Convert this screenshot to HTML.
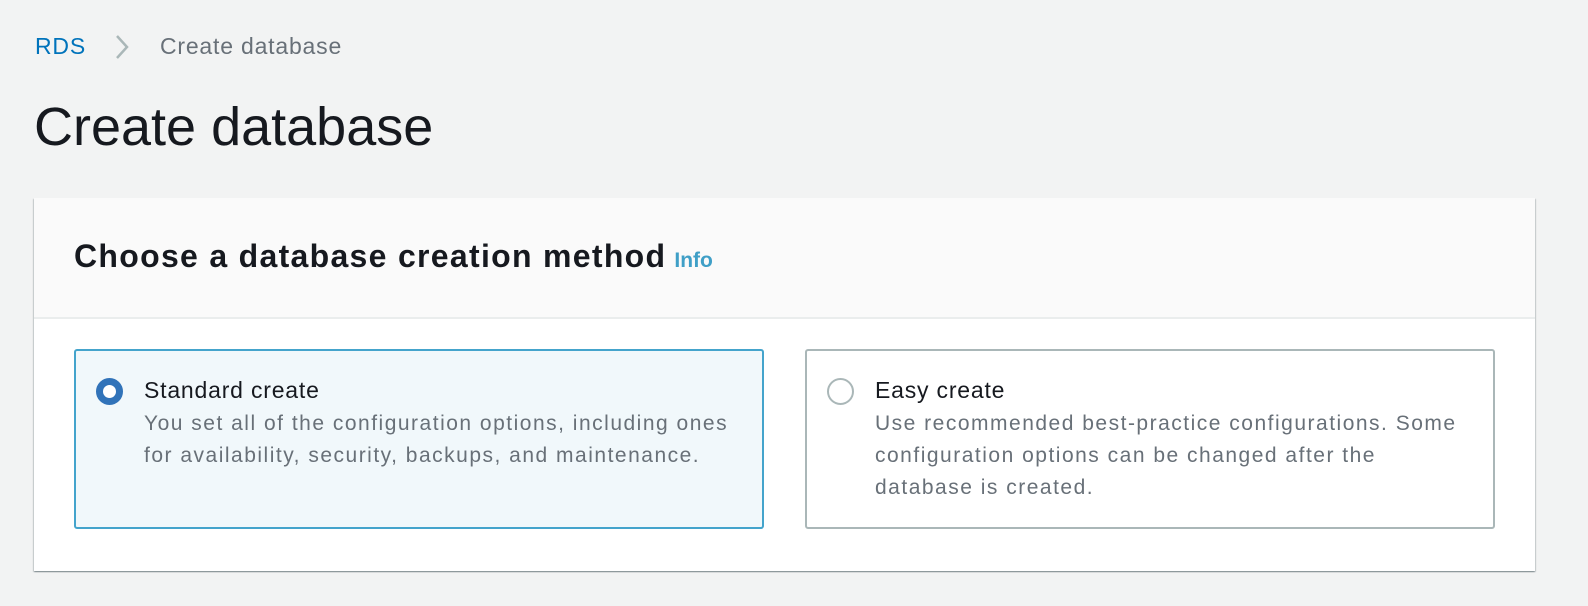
<!DOCTYPE html>
<html><head><meta charset="utf-8"><style>
*{margin:0;padding:0;box-sizing:border-box}
body{width:1588px;height:606px;background:#f2f3f3;font-family:"Liberation Sans",sans-serif;position:relative;overflow:hidden;color:#16191f}
.bc{position:absolute;top:33px;left:35px;font-size:23px;letter-spacing:.8px;color:#687078;display:flex;align-items:center}
.bc a{color:#0073bb;text-decoration:none}
h1{position:absolute;top:96px;left:34px;font-size:54px;font-weight:400;color:#16191f}
.card{position:absolute;left:34px;top:198px;width:1501px;height:373px;background:#fff;box-shadow:0 1px 1px rgba(0,28,36,.3),1px 1px 1px rgba(0,28,36,.15),-1px 1px 1px rgba(0,28,36,.15)}
.hd{height:121px;background:#fafafa;border-bottom:2px solid #eaeded;padding:40px 40px 0}
.hd h2{font-size:32px;letter-spacing:1.3px;font-weight:700;color:#16191f}
.hd h2 span{font-size:21px;letter-spacing:0;color:#3f9fc7;margin-left:8px}
.opt{position:absolute;top:151px;width:690px;height:180px;border:2px solid #aab7b8;border-radius:3px;padding:24px 20px 0 68px}
.opt.sel{border-color:#44a4cc;background:#f1f8fb}
.r{position:absolute;left:20px;top:27px;width:27px;height:27px;border-radius:50%;border:2px solid #aab7b8;background:#fff}
.sel .r{border:7px solid #3173b9}
.t{font-size:23px;letter-spacing:.8px;color:#16191f;line-height:30px}
.d{font-size:21px;letter-spacing:1.5px;color:#687078;line-height:32px;margin-top:3px;white-space:nowrap}
</style></head><body>
<div class="bc"><a>RDS</a><svg width="20" height="26" style="margin:0 28px 0 26px" viewBox="0 0 20 26"><path d="M5 2l10 11-10 11" fill="none" stroke="#aab7b8" stroke-width="2.5"/></svg><span>Create database</span></div>
<h1>Create database</h1>
<div class="card">
<div class="hd"><h2>Choose a database creation method<span>Info</span></h2></div>
<div class="opt sel" style="left:40px"><div class="r"></div><div class="t">Standard create</div><div class="d">You set all of the configuration options, including ones<br>for availability, security, backups, and maintenance.</div></div>
<div class="opt" style="left:771px"><div class="r"></div><div class="t">Easy create</div><div class="d">Use recommended best-practice configurations. Some<br>configuration options can be changed after the<br>database is created.</div></div>
</div>
</body></html>
